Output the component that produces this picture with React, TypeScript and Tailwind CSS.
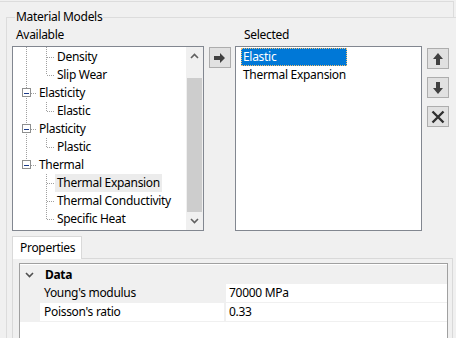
import React from "react";

const F = { fontFamily: '"Noto Sans", "Open Sans", sans-serif', letterSpacing: "-0.3px" };

function TreeLines() {
  const dot = "#a0a0a0";
  const v = (x: number, y1: number, y2: number, k: string) => (
    <line key={k} x1={x + 0.5} y1={y1} x2={x + 0.5} y2={y2} stroke={dot} strokeDasharray="1 1" />
  );
  const h = (x1: number, x2: number, y: number, k: string) => (
    <line key={k} x1={x1} y1={y + 0.5} x2={x2} y2={y + 0.5} stroke={dot} strokeDasharray="1 1" />
  );
  const c = (i: number) => 10 + i * 18;
  const box = (i: number, k: string) => (
    <g key={k}>
      <rect x={9.5} y={c(i) - 4.5} width={8} height={8} fill="#fff" stroke="#8e8f8f" />
      <line x1={11} y1={c(i) + 0.5} x2={16} y2={c(i) + 0.5} stroke="#1b3b8a" />
    </g>
  );
  return (
    <svg className="absolute left-0 top-0" width="172" height="183" shapeRendering="crispEdges">
      {v(13, 0, c(2) - 5, "r1")}
      {v(13, c(2) + 5, c(4) - 5, "r2")}
      {v(13, c(4) + 5, c(6) - 5, "r3")}
      {h(18, 24, c(2), "e1")}
      {h(18, 24, c(4), "e2")}
      {h(18, 24, c(6), "e3")}
      {v(33, 0, c(1), "a")}
      {h(34, 42, c(0), "a0")}
      {h(34, 42, c(1), "a1")}
      {v(33, c(3) - 9, c(3), "b")}
      {h(34, 42, c(3), "b0")}
      {v(33, c(5) - 9, c(5), "c")}
      {h(34, 42, c(5), "c0")}
      {v(33, c(7) - 9, c(9), "d")}
      {h(34, 42, c(7), "d0")}
      {h(34, 42, c(8), "d1")}
      {h(34, 42, c(9), "d2")}
      {box(2, "x1")}
      {box(4, "x2")}
      {box(6, "x3")}
    </svg>
  );
}

function Btn({ children }: { children: React.ReactNode }) {
  return (
    <div className="w-[22px] h-[21px] bg-[#e1e1e1] border border-[#adadad] flex items-center justify-center">
      {children}
    </div>
  );
}

export default function App() {
  const items: { t: string; lvl: number; hl?: boolean }[] = [
    { t: "Density", lvl: 2 },
    { t: "Slip Wear", lvl: 2 },
    { t: "Elasticity", lvl: 1 },
    { t: "Elastic", lvl: 2 },
    { t: "Plasticity", lvl: 1 },
    { t: "Plastic", lvl: 2 },
    { t: "Thermal", lvl: 1 },
    { t: "Thermal Expansion", lvl: 2, hl: true },
    { t: "Thermal Conductivity", lvl: 2 },
    { t: "Specific Heat", lvl: 2 },
  ];
  return (
    <div className="w-[456px] h-[338px] bg-[#f0f0f0] overflow-hidden text-[12px] text-black" style={F}>
      <div className="mt-[1px] h-[16px] w-[454px] border-t border-r border-[#dcdcdc]" />
      <div className="relative ml-[6px] border-l border-t border-[#dcdcdc] pl-[5px]">
        <div className="absolute -top-[9px] left-[8px] px-[1px] bg-[#f0f0f0] leading-[16px]">Material Models</div>
        <div className="flex h-[28px] pt-[9px] leading-[16px]">
          <div className="w-[224px] pl-[4px]">Available</div>
          <div className="pl-[8px]">Selected</div>
        </div>
        <div className="flex items-start">
          <div className="w-[192px] h-[185px] bg-white border border-[#828790] flex">
            <div className="relative flex-1 pt-[1px]">
              <TreeLines />
              {items.map((it) => (
                <div key={it.t} className="h-[18px] leading-[18px] flex">
                  <span
                    className={
                      (it.lvl === 1 ? "ml-[24px]" : "ml-[42px]") +
                      " px-[2px] relative" +
                      (it.hl ? " bg-[#ececec]" : "")
                    }
                  >
                    {it.t}
                  </span>
                </div>
              ))}
            </div>
            <div className="w-[17px] bg-[#f0f0f0] flex flex-col items-center">
              <div className="h-[17px] w-full flex items-center justify-center">
                <svg width="9" height="6" viewBox="0 0 9 6">
                  <path d="M1 5 L4.5 1.5 L8 5" fill="none" stroke="#606060" strokeWidth="1.6" />
                </svg>
              </div>
              <div className="mt-[14px] w-[15px] h-[134px] bg-[#cdcdcd]" />
              <div className="h-[17px] w-full flex items-center justify-center">
                <svg width="9" height="6" viewBox="0 0 9 6">
                  <path d="M1 1 L4.5 4.5 L8 1" fill="none" stroke="#606060" strokeWidth="1.6" />
                </svg>
              </div>
            </div>
          </div>
          <div className="ml-[5px] mt-[1px]">
            <Btn>
              <svg width="12" height="10" viewBox="0 0 12 10">
                <path d="M0 3 H6 V0 L11 5 L6 10 V7 H0 Z" fill="#404040" />
              </svg>
            </Btn>
          </div>
          <div className="ml-[4px] w-[187px] h-[185px] bg-white border border-[#828790] pl-[5px] pt-[1px]">
            <div className="w-[106px] h-[18px] leading-[16px] bg-[#0078d7] text-white px-[1px] border border-dotted border-[#f5c070]">
              Elastic
            </div>
            <div className="h-[18px] leading-[18px] px-[2px]">Thermal Expansion</div>
          </div>
          <div className="ml-[5px] mt-[2px] flex flex-col gap-[8px]">
            <Btn>
              <svg width="10" height="12" viewBox="0 0 10 12">
                <path d="M3 12 V6 H0 L5 0 L10 6 H7 V12 Z" fill="#404040" />
              </svg>
            </Btn>
            <Btn>
              <svg width="10" height="12" viewBox="0 0 10 12">
                <path d="M3 0 V6 H0 L5 12 L10 6 H7 V0 Z" fill="#404040" />
              </svg>
            </Btn>
            <Btn>
              <svg width="14" height="14" viewBox="0 0 14 14">
                <path d="M1.5 1.5 L12.5 12.5 M12.5 1.5 L1.5 12.5" stroke="#303030" strokeWidth="2.4" />
              </svg>
            </Btn>
          </div>
        </div>
        <div className="mt-[5px] relative">
          <div className="relative z-10 w-[70px] h-[23px] bg-white border border-b-0 border-[#d9d9d9] pl-[7px] leading-[21px]">
            Properties
          </div>
          <div className="-mt-[1px] w-[441px] h-[90px] border border-[#d9d9d9] bg-[#f0f0f0] pl-[6px] pt-[4px]">
            <div className="w-[429px] h-[90px] bg-white border border-[#a0a0a0] pt-[1px]">
              <div className="h-[19px] bg-[#f0f0f0] flex items-center">
                <svg className="ml-[5px]" width="9" height="6" viewBox="0 0 9 6">
                  <path d="M1 1 L4.5 4.5 L8 1" fill="none" stroke="#505050" strokeWidth="1.6" />
                </svg>
                <span className="ml-[11px] font-bold leading-[18px]">Data</span>
              </div>
              <div className="h-[19px] flex border-b border-[#f0f0f0]">
                <div className="w-[20px] bg-[#f0f0f0]" />
                <div className="w-[185px] bg-[#f0f0f0] pl-[4px] leading-[18px] border-r border-[#f0f0f0]">Young's modulus</div>
                <div className="pl-[3px] leading-[18px] border-l border-[#f0f0f0]">70000 MPa</div>
              </div>
              <div className="h-[19px] flex border-b border-[#f0f0f0]">
                <div className="w-[20px] bg-[#f0f0f0]" />
                <div className="w-[185px] pl-[4px] leading-[18px] border-r border-[#f0f0f0]">Poisson's ratio</div>
                <div className="pl-[3px] leading-[18px] border-l border-[#f0f0f0]">0.33</div>
              </div>
            </div>
          </div>
        </div>
      </div>
    </div>
  );
}
